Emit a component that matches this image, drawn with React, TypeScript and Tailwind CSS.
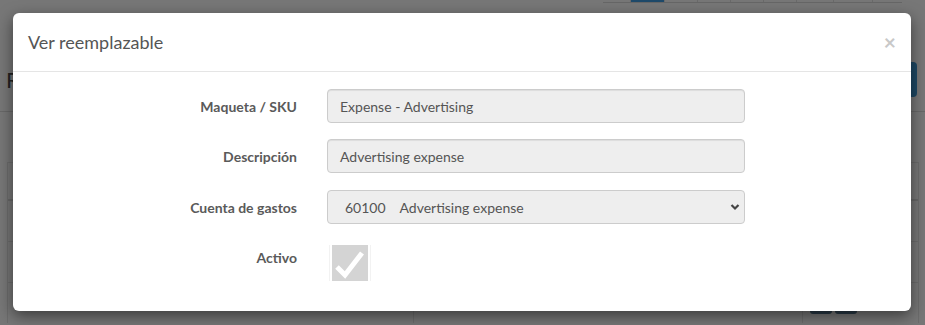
import React from "react";

const font = { fontFamily: "Lato, 'Noto Sans', sans-serif" };

function Row({ label, children, className = "" }: { label: string; children: React.ReactNode; className?: string }) {
  return (
    <div className={"flex items-center gap-[30px] " + className}>
      <div className="w-[269px] text-right text-[14px] font-bold text-[#5a5a5a]">{label}</div>
      {children}
    </div>
  );
}

function Field({ value }: { value: string }) {
  return (
    <div className="w-[418px] h-[34px] flex items-center px-[12px] bg-[#eee] border border-[#ccc] rounded-[4px] text-[14px] text-[#555] shadow-[inset_0_1px_1px_rgba(0,0,0,0.075)]">
      {value}
    </div>
  );
}

export default function App() {
  return (
    <div className="relative w-[925px] h-[325px] overflow-hidden bg-[#777]" style={font}>
      {/* background page (dimmed) */}
      <div className="flex flex-col">
        <div className="ml-[603px] w-[299px] h-[3px] flex border-b border-[#666]">
          <div className="w-[28px] border-r border-[#6a6a6a]" />
          <div className="w-[34px] bg-[#1f4a6a] border-r border-[#6a6a6a]" />
          <div className="w-[33px] border-r border-[#6a6a6a]" />
          <div className="w-[33px] border-r border-[#6a6a6a]" />
          <div className="w-[33px] border-r border-[#6a6a6a]" />
          <div className="w-[33px] border-r border-[#6a6a6a]" />
          <div className="w-[37px] border-r border-[#6a6a6a]" />
          <div className="w-[39px] border-r border-[#6a6a6a]" />
          <div className="flex-1" />
        </div>
        <div className="h-[109px] pt-[59px] border-b border-[#686868]">
          <div className="h-[35px] flex items-center justify-between pl-[6px] pr-[8px]">
            <span className="text-[22px] text-[#222]">R</span>
            <div className="w-[40px] h-[35px] rounded-[4px] bg-[#1d4864]" />
          </div>
        </div>
        <div className="mt-[50px] ml-[7px] w-[912px] border border-[#6c6c6c] border-b-0">
          <div className="h-[38px] border-b-2 border-[#686868]" />
          <div className="h-[41px] border-b border-[#6c6c6c]" />
          <div className="h-[41px] border-b border-[#6c6c6c]" />
          <div className="h-[40px] flex">
            <div className="w-[406px] border-r border-[#6c6c6c]" />
            <div className="w-[389px] border-r border-[#6c6c6c]" />
            <div className="flex gap-[3px] pl-[7px] pt-[25px]">
              <div className="w-[22px] h-[6px] rounded-[3px] bg-[#2a3a46]" />
              <div className="w-[22px] h-[6px] rounded-[3px] bg-[#2a3a46]" />
            </div>
          </div>
        </div>
      </div>

      {/* modal */}
      <div className="absolute inset-0 pl-[13px] pt-[13px]">
        <div className="w-[898px] h-[298px] bg-white rounded-[6px] shadow-[0_5px_15px_rgba(0,0,0,0.5)] flex flex-col">
          <div className="h-[59px] border-b border-[#e5e5e5] flex items-center justify-between px-[15px]">
            <span className="text-[18px] text-[#555]">Ver reemplazable</span>
            <span className="text-[21px] font-bold leading-none text-[#c8c8c8] pb-[2px]">×</span>
          </div>
          <div className="px-[15px] pt-[17px] flex flex-col gap-[16px]">
            <Row label="Maqueta / SKU">
              <Field value="Expense - Advertising" />
            </Row>
            <Row label="Descripción">
              <Field value="Advertising expense" />
            </Row>
            <Row label="Cuenta de gastos" className="mt-[1px]">
              <div className="w-[418px] h-[34px] flex items-center justify-between pl-[17px] pr-[4px] bg-[#eee] border border-[#ccc] rounded-[4px] text-[14px] text-[#555]">
                <span className="whitespace-pre">{"60100    Advertising expense"}</span>
                <svg width="10" height="8" viewBox="0 0 10 8">
                  <polyline points="1.5,2 5,5.5 8.5,2" fill="none" stroke="#444" strokeWidth="2.2" />
                </svg>
              </div>
            </Row>
            <div className="flex items-start gap-[30px]">
              <div className="w-[269px] text-right text-[14px] font-bold text-[#5a5a5a] pt-[7px]">Activo</div>
              <div className="mt-[5px] ml-[2px] px-[2px] border-x border-[#f2f2f2]">
                <div className="w-[36px] h-[36px] bg-[#d4d4d4]">
                  <svg width="36" height="36" viewBox="0 0 36 36">
                    <polyline points="5,22 13,30 30,8" fill="none" stroke="#fff" strokeWidth="5" />
                  </svg>
                </div>
              </div>
            </div>
          </div>
        </div>
      </div>
    </div>
  );
}
